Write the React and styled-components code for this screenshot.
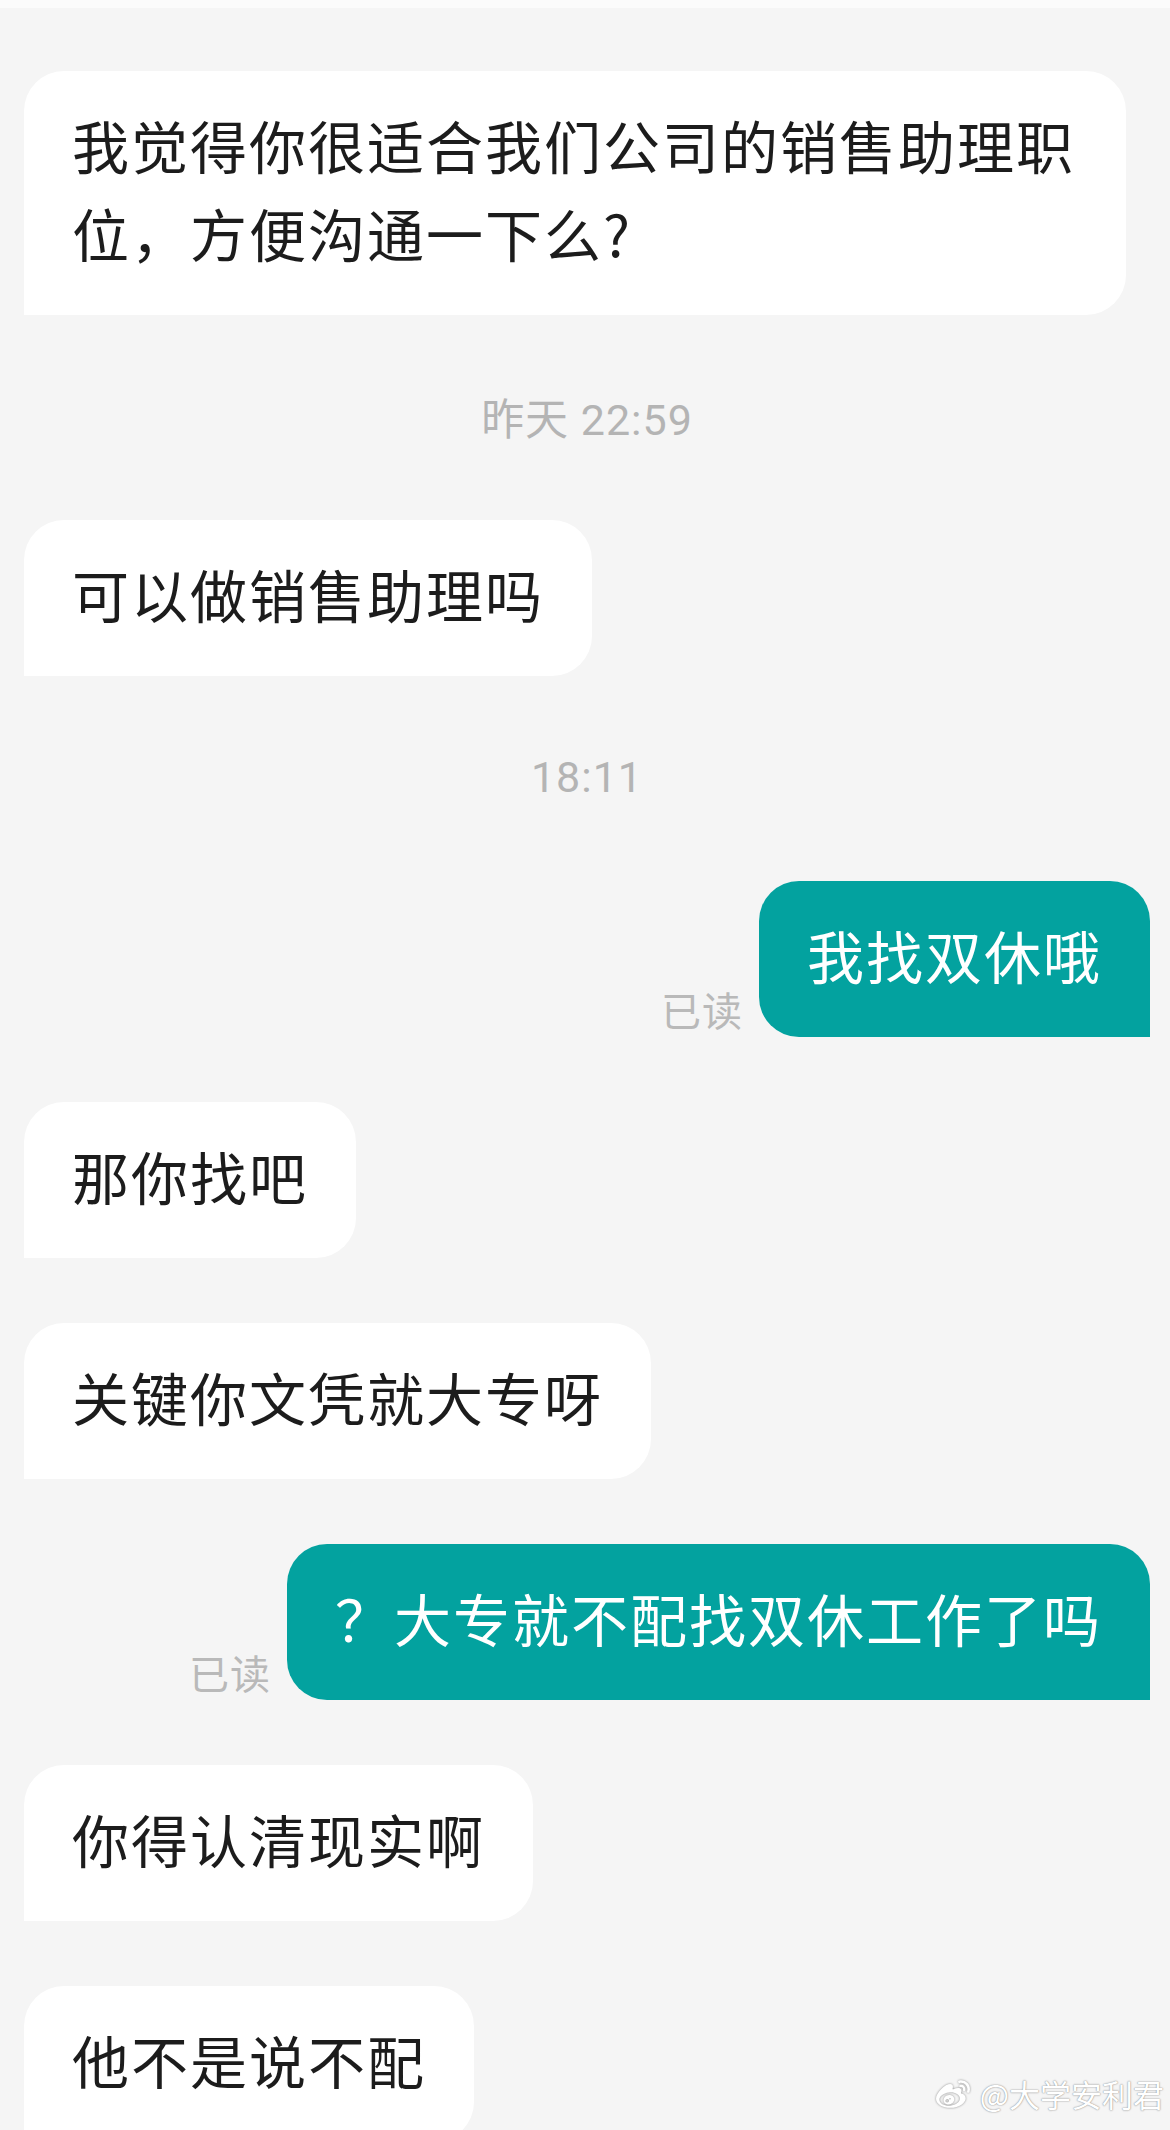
import { createGlobalStyle, styled } from "styled-components";
import { SiSinaweibo } from "react-icons/si";

const GlobalStyle = createGlobalStyle`
	html, body {
		margin: 0;
		background: #f5f5f5;
	}
	body {
		font-family: "Noto Sans CJK SC", "Noto Sans", sans-serif;
	}
`;

const Page = styled.main`
	position: relative;
	box-sizing: border-box;
	height: 2130px;
	overflow: hidden;
	display: flex;
	flex-direction: column;
	gap: 65px;
	padding: 71px 20px 0 24px;
	background: linear-gradient(#fbfbfb 0, #fbfbfb 8px, #f5f5f5 8px);

	& > * {
		flex-shrink: 0;
	}
`;

const Row = styled.div`
	display: flex;
	justify-content: ${(p) => (p.$mine ? "flex-end" : "flex-start")};
	align-items: flex-end;
	gap: 16px;
`;

const Bubble = styled.div`
	box-sizing: border-box;
	max-width: 1102px;
	padding: 29px 48px 39px;
	font-size: 57px;
	line-height: 88px;
	letter-spacing: 2px;
	font-weight: 400;
	color: ${(p) => (p.$mine ? "#ffffff" : "#1c1c1c")};
	background: ${(p) => (p.$mine ? "#03a29f" : "#ffffff")};
	border-radius: ${(p) => (p.$mine ? "40px 40px 0 40px" : "40px 40px 40px 0")};
`;

const ReadTag = styled.span`
	font-size: 40px;
	line-height: 48px;
	margin-bottom: 4px;
	color: #b9b9b9;
	letter-spacing: 1px;
`;

const Stamp = styled.div`
	box-sizing: border-box;
	height: 75px;
	padding-bottom: 4px;
	display: flex;
	align-items: center;
	justify-content: center;
	font-family: Roboto, "Noto Sans CJK SC", sans-serif;
	font-size: 43px;
	letter-spacing: 1px;
	color: #b4b4b4;
`;

const Watermark = styled.div`
	position: absolute;
	right: 6px;
	bottom: 18px;
	display: flex;
	align-items: center;
	gap: 8px;
	font-size: 31px;
	line-height: 36px;
	color: #ffffff;
	text-shadow: 0 0 1px #8a8a8a, 0 0 2px #a8a8a8;

	svg {
		width: 38px;
		height: 34px;
		color: #ffffff;
		filter: drop-shadow(0 0 1px #8a8a8a);
	}
`;

const messages = [
	{ text: "我觉得你很适合我们公司的销售助理职位，方便沟通一下么?" },
	{ stamp: "昨天 22:59" },
	{ text: "可以做销售助理吗" },
	{ stamp: "18:11" },
	{ text: "我找双休哦", mine: true },
	{ text: "那你找吧" },
	{ text: "关键你文凭就大专呀" },
	{ text: "？大专就不配找双休工作了吗", mine: true },
	{ text: "你得认清现实啊" },
	{ text: "他不是说不配" },
];

export default function App() {
	return (
		<>
			<GlobalStyle />
			<Page>
				{messages.map((m, i) =>
					m.stamp ? (
						<Stamp key={i}>{m.stamp}</Stamp>
					) : (
						<Row key={i} $mine={m.mine}>
							{m.mine && <ReadTag>已读</ReadTag>}
							<Bubble $mine={m.mine}>{m.text}</Bubble>
						</Row>
					)
				)}
				<Watermark>
					<SiSinaweibo />
					<span>@大学安利君</span>
				</Watermark>
			</Page>
		</>
	);
}
